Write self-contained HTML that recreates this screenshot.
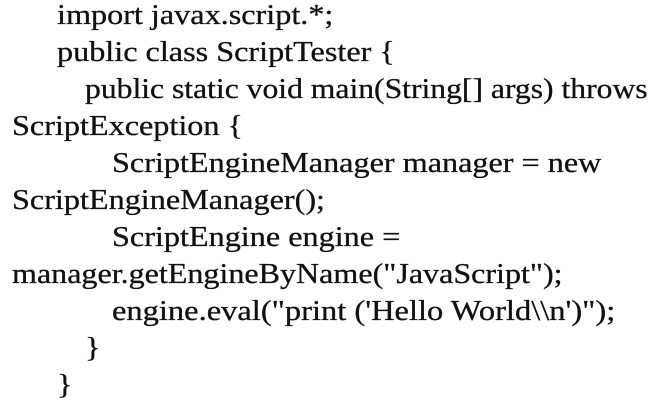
<!DOCTYPE html>
<html><head><meta charset="utf-8"><style>
html,body{margin:0;padding:0;background:#fff;width:661px;height:405px;overflow:hidden}
.l{position:absolute;white-space:pre;font-family:"Liberation Serif",serif;font-size:28.5px;line-height:37px;color:#111;transform:scaleX(1.13);transform-origin:0 0;-webkit-text-stroke:0.3px #111;}
</style></head><body>
<div class="l" style="left:57px;top:-3px">import javax.script.*;</div>
<div class="l" style="left:57px;top:34px">public class ScriptTester {</div>
<div class="l" style="left:85px;top:71px;transform:scaleX(1.11)">public static void main(String[] args) throws</div>
<div class="l" style="left:12px;top:108px">ScriptException {</div>
<div class="l" style="left:112px;top:145px">ScriptEngineManager manager = new</div>
<div class="l" style="left:12px;top:182px">ScriptEngineManager();</div>
<div class="l" style="left:112px;top:219px">ScriptEngine engine =</div>
<div class="l" style="left:12px;top:256px;transform:scaleX(1.125)">manager.getEngineByName("JavaScript");</div>
<div class="l" style="left:112px;top:293px;transform:scaleX(1.14)">engine.eval("print ('Hello World\\n')");</div>
<div class="l" style="left:85px;top:330px">}</div>
<div class="l" style="left:57px;top:367px">}</div>
</body></html>
